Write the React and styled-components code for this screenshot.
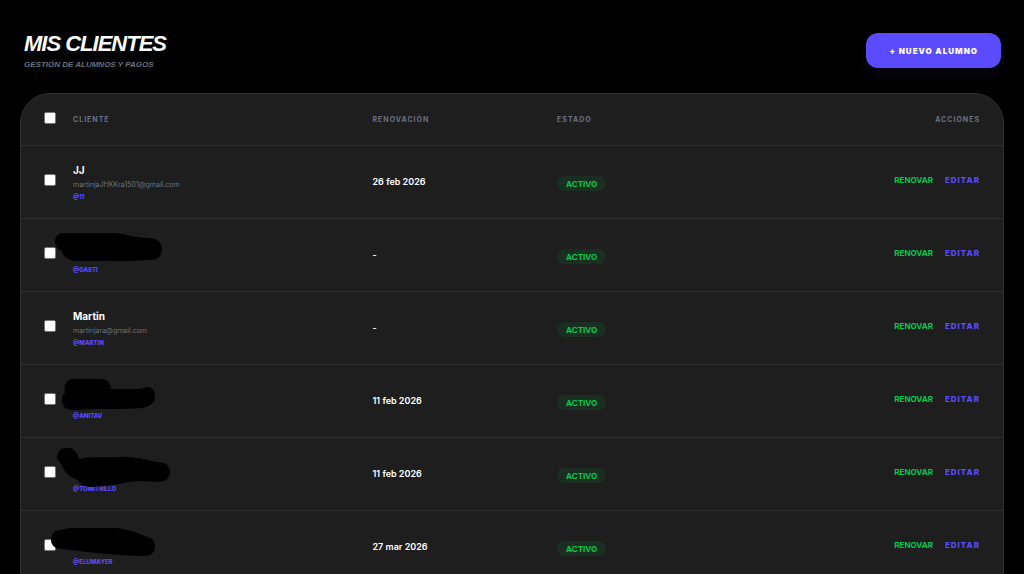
import React from "react";
import styled, { createGlobalStyle } from "styled-components";

const GlobalStyle = createGlobalStyle`
  * { box-sizing: border-box; }
  html { scrollbar-width: none; }
  body { margin: 0; background: #000; color: #fff; font-family: Inter, "Liberation Sans", sans-serif; }
`;

const Page = styled.main`
  padding: 32px 20px 0;
`;

const Header = styled.header`
  display: flex;
  justify-content: space-between;
  align-items: flex-start;
  padding: 1px 3px 0 4px;
  margin-bottom: 23px;
`;

const Title = styled.h1`
  margin: 0;
  font: italic 700 22px/22px "Liberation Sans", sans-serif;
  letter-spacing: -1px;
`;

const Subtitle = styled.p`
  margin: 5px 0 0;
  color: #6a7282;
  font: italic 700 8px/10px "Liberation Sans", sans-serif;
  text-transform: uppercase;
`;

const NewButton = styled.button`
  height: 35px;
  padding: 0 23px 0 24px;
  border: 0;
  border-radius: 12px;
  background: #5b4bff;
  color: #fff;
  font: 900 8px/12px Inter, sans-serif;
  letter-spacing: 1px;
  text-transform: uppercase;
  box-shadow: 0 7px 11px rgba(110, 60, 200, 0.09);
  cursor: pointer;
`;

const Card = styled.section`
  overflow: hidden;
  border: 1px solid #303030;
  border-radius: 30px 30px 0 0;
  background: #1e1e1e;
`;

const Table = styled.table`
  width: 100%;
  table-layout: fixed;
  border-collapse: separate;
  border-spacing: 0;
`;

const Col = styled.col`
  width: ${(p) => p.$width};
`;

const HeadCell = styled.th`
  height: 52px;
  padding: 0 ${(p) => (p.$right ? "23px" : "0")} 0 ${(p) => (p.$check ? "23px" : "0")};
  border-bottom: 1px solid #303030;
  color: #6a7282;
  font-size: 7px;
  line-height: 10px;
  font-weight: 700;
  letter-spacing: 1px;
  text-align: ${(p) => (p.$right ? "right" : "left")};
  text-transform: uppercase;
`;

const Cell = styled.td`
  position: relative;
  height: 73px;
  padding: 0 ${(p) => (p.$right ? "23px" : "0")} 0 ${(p) => (p.$check ? "23px" : "0")};
  border-bottom: 1px solid #303030;
  vertical-align: middle;
`;

const Check = styled.input`
  appearance: none;
  display: block;
  width: 12px;
  height: 12px;
  margin: 0 0 4px;
  border: 1px solid #767676;
  border-radius: 2px;
  background: #fff;
  &:checked { background: #5b4bff; }
`;

const Name = styled.div`
  height: 17px;
  font-size: 10px;
  line-height: 16px;
  font-weight: 700;
`;

const Email = styled.div`
  height: 12px;
  color: #6a7282;
  font-size: 7px;
  line-height: 12px;
`;

const Handle = styled.div`
  color: #5b4bff;
  font-size: 6px;
  line-height: 12px;
  font-weight: 800;
`;

const Scribble = styled.svg`
  position: absolute;
  top: 0;
  left: -32px;
  width: 140px;
  height: 73px;
  pointer-events: none;
`;

const DateText = styled.time`
  display: block;
  font-size: 9px;
  line-height: 12px;
  font-weight: 600;
`;

const Badge = styled.span`
  display: block;
  width: max-content;
  margin-top: 2px;
  padding: 3px 9px 2px;
  border-radius: 8px;
  background: #1b2e22;
  color: #00c950;
  font-size: 8px;
  line-height: 10px;
  font-weight: 700;
`;

const Actions = styled.div`
  display: flex;
  justify-content: flex-end;
  align-items: center;
  gap: 12px;
  padding-bottom: 4px;
`;

const Action = styled.button`
  padding: 0;
  border: 0;
  background: none;
  color: ${(p) => (p.$renew ? "#00c950" : "#5b4bff")};
  font: ${(p) => (p.$renew ? "700" : "800")} 8px/12px Inter, sans-serif;
  letter-spacing: ${(p) => (p.$renew ? "0" : "1px")};
  cursor: pointer;
`;

const clients = [
  { name: "JJ", email: "martinjaJHKKra1501@gmail.com", handle: "@11", date: "26 feb 2026" },
  {
    handle: "@GASTI",
    date: "-",
    mark: "M22 14H74C84 15 94 19 109 19C117 20 121 24 121 30C121 37 117 41 109 41L87 42H34C26 41 22 37 21 32C16 30 14 26 14 23C14 18 17 14 22 14Z",
  },
  { name: "Martin", email: "martinjara@gmail.com", handle: "@MARTIN", date: "-" },
  {
    handle: "@ANITAV",
    date: "11 feb 2026",
    mark: "M32 14H60C66 14 70 18 70 24L99 24C102 23 105 22 107 22C112 23 114 27 114 32C114 38 109 41 102 43C89 44 69 44 54 44L36 45H31C25 45 21 41 21 35C21 31 22 29 24 28C22 21 25 14 32 14Z",
  },
  {
    handle: "@TOMITRILLO",
    date: "11 feb 2026",
    mark: "M25 10C32 9 36 14 38 21C49 18 64 20 79 19C94 18 107 23 116 24C125 24 129 28 129 34C129 40 125 43 119 44C109 44 99 42 89 44C74 46 64 49 49 49C43 49 38 45 37 42C27 39 24 34 20 26C16 22 16 19 16 18C17 13 20 10 25 10Z",
  },
  {
    handle: "@ELUMAYER",
    date: "27 mar 2026",
    mark: "M19 19C23 19 25 17 29 17H74C89 18 99 23 106 26C112 27 114 31 114 35C114 41 110 45 104 45C89 45 69 43 54 42L21 38C14 38 10 34 10 29C10 23 14 19 19 19Z",
  },
];

function ClientRow({ client }) {
  return (
    <tr>
      <Cell $check>
        <Check type="checkbox" aria-label={`Seleccionar ${client.handle}`} />
      </Cell>
      <Cell>
        <Name>{client.name}</Name>
        <Email>{client.email}</Email>
        <Handle>{client.handle}</Handle>
        {client.mark && (
          <Scribble viewBox="0 0 140 73" aria-hidden="true">
            <path d={client.mark} fill="#000" />
          </Scribble>
        )}
      </Cell>
      <Cell>
        <DateText>{client.date}</DateText>
      </Cell>
      <Cell>
        <Badge>ACTIVO</Badge>
      </Cell>
      <Cell $right>
        <Actions>
          <Action type="button" $renew>RENOVAR</Action>
          <Action type="button">EDITAR</Action>
        </Actions>
      </Cell>
    </tr>
  );
}

export default function App() {
  return (
    <>
      <GlobalStyle />
      <Page>
        <Header>
          <div>
            <Title>MIS CLIENTES</Title>
            <Subtitle>Gestión de alumnos y pagos</Subtitle>
          </div>
          <NewButton type="button">+ Nuevo alumno</NewButton>
        </Header>
        <Card>
          <Table>
            <colgroup>
              <Col $width="52px" />
              <Col $width="30.5%" />
              <Col $width="18.8%" />
              <Col />
              <Col $width="20%" />
            </colgroup>
            <thead>
              <tr>
                <HeadCell $check>
                  <Check type="checkbox" aria-label="Seleccionar todos" />
                </HeadCell>
                <HeadCell>Cliente</HeadCell>
                <HeadCell>Renovación</HeadCell>
                <HeadCell>Estado</HeadCell>
                <HeadCell $right>Acciones</HeadCell>
              </tr>
            </thead>
            <tbody>
              {clients.map((client) => (
                <ClientRow key={client.handle} client={client} />
              ))}
            </tbody>
          </Table>
        </Card>
      </Page>
    </>
  );
}
